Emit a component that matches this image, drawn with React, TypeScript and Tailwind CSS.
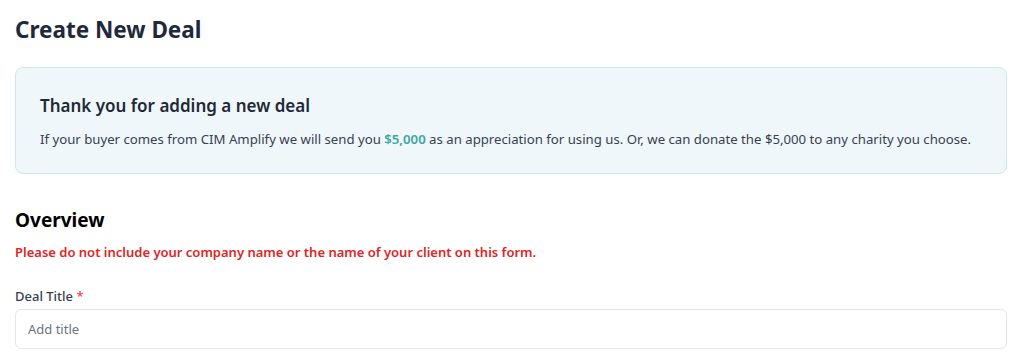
import React from 'react'

export default function App() {
  return (
    <div className="min-h-screen bg-white pl-[15px] pr-[20px] pt-[14px] font-['Noto_Sans',sans-serif]">
      <h1 className="text-[22.5px] font-bold leading-[32px] text-[#1e293b]">Create New Deal</h1>

      <div className="mt-[21px] rounded-lg border border-[#cfe7ea] bg-[#eff7fa] px-6 py-[24px]">
        <h2 className="text-[17px] font-semibold leading-[28px] text-[#1f2937]">Thank you for adding a new deal</h2>
        <p className="mt-[9px] text-[13.2px] leading-[20px] text-[#374151]">
          If your buyer comes from CIM Amplify we will send you{' '}
          <span className="font-semibold text-[#3aa6a0]">$5,000</span> as an appreciation for using us. Or, we can
          donate the $5,000 to any charity you choose.
        </p>
      </div>

      <h3 className="mt-[32px] text-[19px] font-bold leading-[28px] text-black">Overview</h3>
      <p className="mt-[8px] text-[13px] font-semibold leading-[20px] text-[#dc2626]">
        Please do not include your company name or the name of your client on this form.
      </p>

      <div className="mt-[24px]">
        <label className="block text-[13px] font-medium leading-[20px] text-[#374151]" htmlFor="deal-title">
          Deal Title <span className="text-[#ef4444]">*</span>
        </label>
        <input
          className="mt-[3px] block h-[40px] w-full rounded-md border border-[#e5e7eb] px-3 text-[13px] text-[#111827] outline-none placeholder:text-[#6b7280]"
          id="deal-title"
          placeholder="Add title"
          type="text"
        />
      </div>
    </div>
  )
}
